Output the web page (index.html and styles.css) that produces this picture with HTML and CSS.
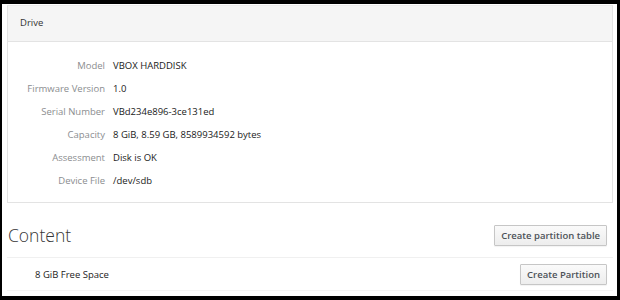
FILE: index.html
```html
<!DOCTYPE html>
<html lang="en">

<head>
    <meta charset="UTF-8">
    <meta name="viewport" content="width=device-width, initial-scale=1.0">
    <link rel="stylesheet" href="styles.css">
    <title>Drive</title>
</head>

<body>
    <div class="screen">
        <!-- Drive details -->
        <section class="panel">
            <header class="panel-heading">Drive</header>
            <div class="details">
                <span class="label">Model</span>
                <span class="value">VBOX HARDDISK</span>

                <span class="label">Firmware Version</span>
                <span class="value">1.0</span>

                <span class="label">Serial Number</span>
                <span class="value">VBd234e896-3ce131ed</span>

                <span class="label">Capacity</span>
                <span class="value">8 GiB, 8.59 GB, 8589934592 bytes</span>

                <span class="label">Assessment</span>
                <span class="value">Disk is OK</span>

                <span class="label">Device File</span>
                <span class="value">/dev/sdb</span>
            </div>
        </section>

        <!-- Content -->
        <div class="content-heading">
            <h2>Content</h2>
            <button class="btn">Create partition table</button>
        </div>

        <div class="content-row">
            <span class="free-space">8 GiB Free Space</span>
            <button class="btn">Create Partition</button>
        </div>
    </div>
</body>

</html>
```

FILE: styles.css
```css
body {
    margin: 0;
    background: #000;
    font-family: 'Open Sans', sans-serif;
    font-size: 9.5px;
    color: #222;
}

.screen {
    margin: 4px 3px 4px 2px;
    height: 292px;
    box-sizing: border-box;
    padding: 1px 4px 0 5px;
    background: #fff;
    overflow: hidden;
}

.panel {
    border: 1px solid #e3e3e3;
    border-top-color: #ececec;
}

.panel-heading {
    height: 35px;
    line-height: 34px;
    padding-left: 12px;
    background: #f5f5f5;
    border-bottom: 1px solid #e3e3e3;
    color: #333;
}

.details {
    display: grid;
    grid-template-columns: 97px 1fr;
    column-gap: 8px;
    grid-auto-rows: 23px;
    align-items: center;
    padding: 12px 0 10px;
}

.label {
    text-align: right;
    color: #8b8d8f;
}

.value {
    color: #1a1a1a;
}

.content-heading {
    display: flex;
    align-items: center;
    justify-content: space-between;
    height: 54px;
    padding: 0 6px 0 1px;
    border-bottom: 1px solid #f0f0f0;
}

.content-heading h2 {
    margin: 10px 0 0;
    font-size: 17.5px;
    font-weight: 300;
    color: #363636;
}

.btn {
    font-family: 'Open Sans', sans-serif;
    font-size: 9.5px;
    font-weight: 600;
    color: #4d5258;
    height: 21px;
    padding: 0 6px;
    border: 1px solid #c6c6c6;
    border-radius: 1px;
    background: linear-gradient(#fafafa, #ededed);
    box-shadow: 0 1px 1px rgba(0, 0, 0, 0.05);
}

.content-heading .btn {
    margin-top: 11px;
}

.content-row {
    display: flex;
    align-items: center;
    justify-content: space-between;
    height: 32px;
    padding: 0 6px 0 28px;
    border-bottom: 1px solid #f5f5f5;
}
```
